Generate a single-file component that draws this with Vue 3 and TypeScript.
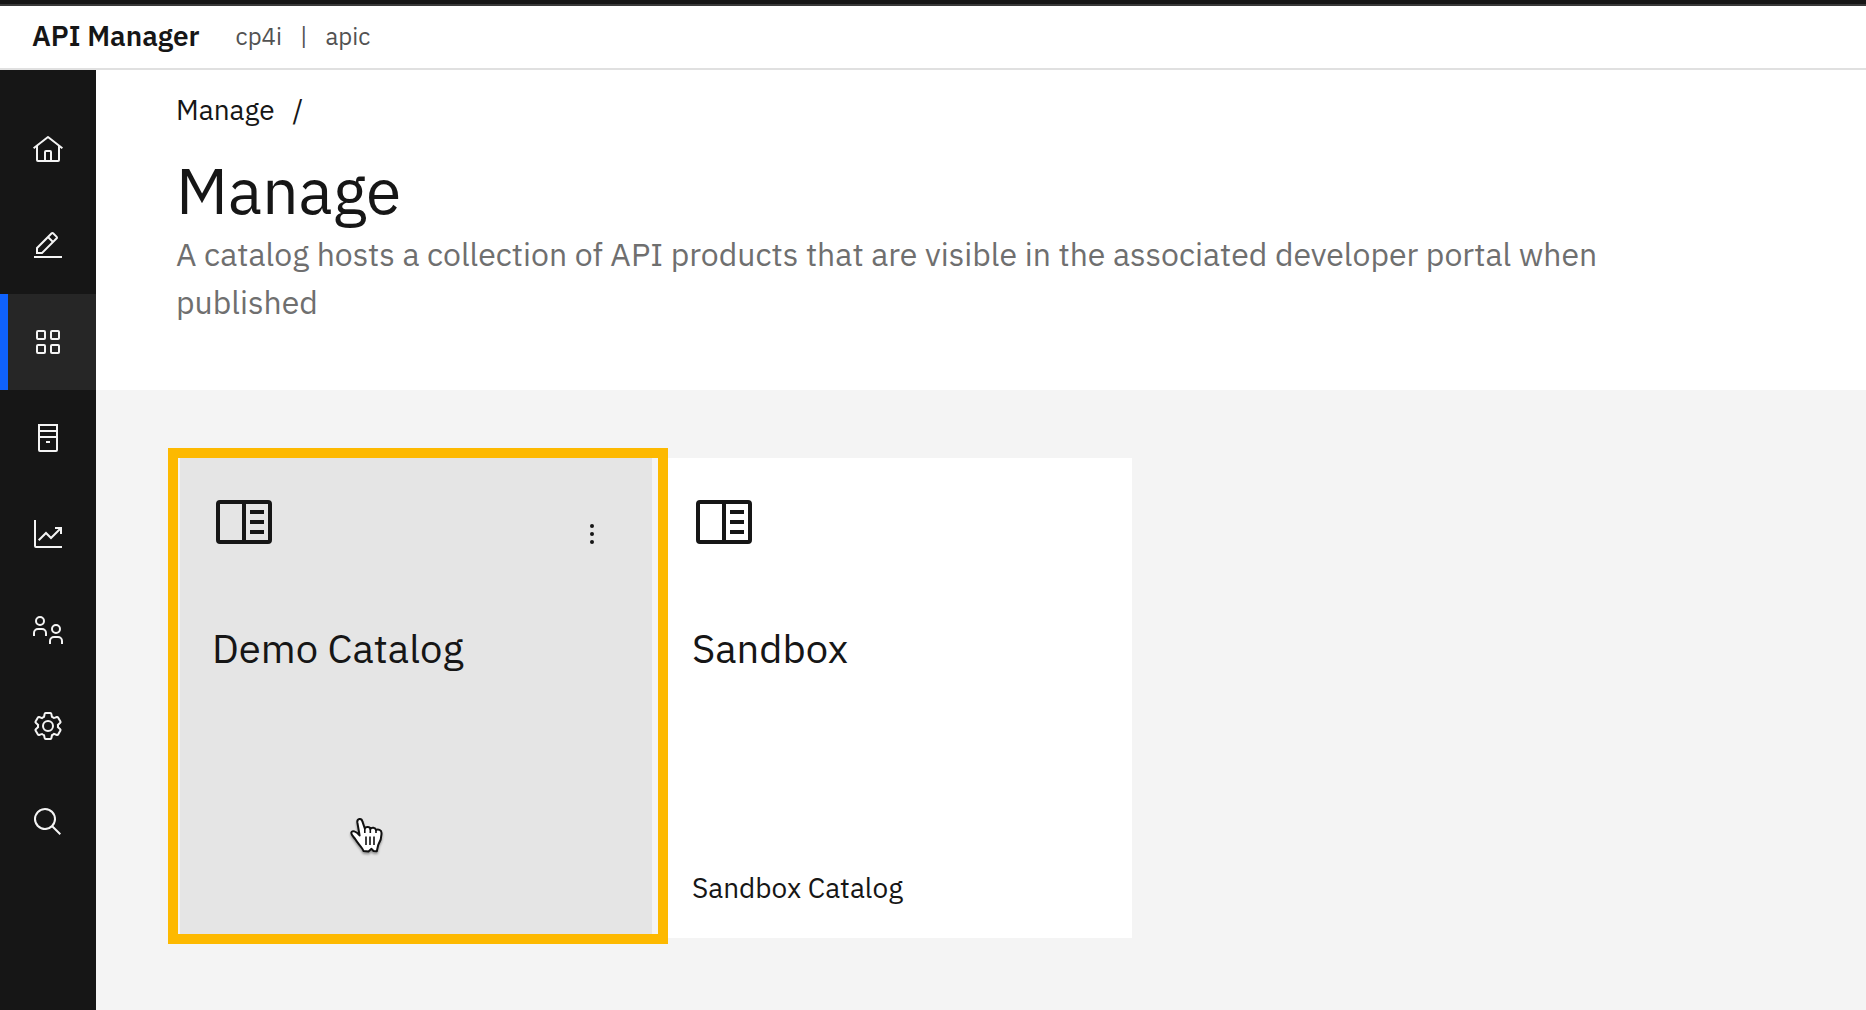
<script setup lang="ts">
interface NavItem {
  label: string
  active?: boolean
  fills?: string[]
  strokes?: string[]
}

interface Catalog {
  title: string
  summary?: string
  selected?: boolean
}

const navItems: NavItem[] = [
  {
    label: 'Home',
    fills: [
      'M16.61 2.21a1.01 1.01 0 0 0-1.24 0L1 13.42l1.24 1.57L4 13.62V26a2 2 0 0 0 2 2h20a2 2 0 0 0 2-2V13.63L29.76 15 31 13.43ZM18 26h-4v-8h4Zm2 0v-8a2 2 0 0 0-2-2h-4a2 2 0 0 0-2 2v8H6V12.06l10-7.79 10 7.8V26Z',
    ],
  },
  {
    label: 'Develop',
    fills: [
      'M2 26h28v2H2z',
      'M25.4 9c.8-.8.8-2 0-2.8l-3.6-3.6c-.8-.8-2-.8-2.8 0l-15 15V24h6.4l15-15zm-5-5L24 7.6l-3 3L17.4 7l3-3zM6 22v-3.6l10-10 3.6 3.6-10 10H6z',
    ],
  },
  {
    label: 'Manage',
    active: true,
    fills: [
      'M12 4H6a2 2 0 0 0-2 2v6a2 2 0 0 0 2 2h6a2 2 0 0 0 2-2V6a2 2 0 0 0-2-2Zm0 8H6V6h6Z',
      'M26 4h-6a2 2 0 0 0-2 2v6a2 2 0 0 0 2 2h6a2 2 0 0 0 2-2V6a2 2 0 0 0-2-2Zm0 8h-6V6h6Z',
      'M12 18H6a2 2 0 0 0-2 2v6a2 2 0 0 0 2 2h6a2 2 0 0 0 2-2v-6a2 2 0 0 0-2-2Zm0 8H6v-6h6Z',
      'M26 18h-6a2 2 0 0 0-2 2v6a2 2 0 0 0 2 2h6a2 2 0 0 0 2-2v-6a2 2 0 0 0-2-2Zm0 8h-6v-6h6Z',
    ],
  },
  {
    label: 'Resources',
    strokes: ['M7 3h18v25a1 1 0 0 1-1 1H8a1 1 0 0 1-1-1Z', 'M7 9h18M7 15h18M14 20h4'],
  },
  {
    label: 'Analytics',
    strokes: ['M3 2v26a1 1 0 0 0 1 1h26', 'M6.7 22.3 14 15l5 5L29 10', 'M23 10h6v6'],
  },
  {
    label: 'Members',
    strokes: [
      'M12 7a4 4 0 1 1-8 0 4 4 0 0 1 8 0Z',
      'M2 22v-3a4 4 0 0 1 4-4h4a4 4 0 0 1 4 4v3',
      'M28 15a4 4 0 1 1-8 0 4 4 0 0 1 8 0Z',
      'M18 30v-3a4 4 0 0 1 4-4h4a4 4 0 0 1 4 4v3',
    ],
  },
  {
    label: 'Settings',
    fills: [
      'M27 16.76c0-.25 0-.5 0-.76s0-.51 0-.77l1.92-1.68A2 2 0 0 0 29.3 11l-2.36-4a2 2 0 0 0-1.73-1 2 2 0 0 0-.64.1l-2.43.82a11.35 11.35 0 0 0-1.31-.75l-.51-2.52a2 2 0 0 0-2-1.61h-4.68a2 2 0 0 0-2 1.61l-.51 2.52a11.48 11.48 0 0 0-1.32.75l-2.38-.86A2 2 0 0 0 6.79 6a2 2 0 0 0-1.73 1L2.7 11a2 2 0 0 0 .41 2.51L5 15.24c0 .25 0 .5 0 .76s0 .51 0 .77l-1.89 1.68A2 2 0 0 0 2.7 21l2.36 4a2 2 0 0 0 1.73 1 2 2 0 0 0 .64-.1l2.43-.82a11.35 11.35 0 0 0 1.31.75l.51 2.52a2 2 0 0 0 2 1.61h4.72a2 2 0 0 0 2-1.61l.51-2.52a11.48 11.48 0 0 0 1.32-.75l2.42.82a2 2 0 0 0 .64.1 2 2 0 0 0 1.73-1l2.28-4a2 2 0 0 0-.41-2.51ZM25.21 24l-3.43-1.16a8.86 8.86 0 0 1-2.71 1.57L18.36 28h-4.72l-.71-3.55a9.36 9.36 0 0 1-2.7-1.57L6.79 24l-2.36-4 2.72-2.4a8.9 8.9 0 0 1 0-3.13L4.43 12l2.36-4 3.43 1.16a8.86 8.86 0 0 1 2.71-1.57L13.64 4h4.72l.71 3.55a9.36 9.36 0 0 1 2.7 1.57L25.21 8l2.36 4-2.72 2.4a8.9 8.9 0 0 1 0 3.13L27.57 20Z',
      'M16 22a6 6 0 1 1 0-12 6 6 0 0 1 0 12Zm0-10a4 4 0 1 0 0 8 4 4 0 0 0 0-8Z',
    ],
  },
  {
    label: 'Search',
    fills: ['m29 27.59-7.55-7.56a11.02 11.02 0 1 0-1.42 1.42L27.59 29ZM4 13a9 9 0 1 1 9 9 9 9 0 0 1-9-9Z'],
  },
]

const catalogs: Catalog[] = [
  { title: 'Demo Catalog', selected: true },
  { title: 'Sandbox', summary: 'Sandbox Catalog' },
]
</script>

<template>
  <div class="app">
    <header class="topbar">
      <span class="product">API Manager</span>
      <span class="context">
        <span>cp4i</span>
        <span>|</span>
        <span>apic</span>
      </span>
    </header>

    <div class="body">
      <nav class="sidebar" aria-label="Main">
        <a
          v-for="item in navItems"
          :key="item.label"
          href="#"
          class="nav-link"
          :class="{ active: item.active }"
          :aria-label="item.label"
        >
          <svg class="nav-icon" viewBox="0 0 32 32" aria-hidden="true">
            <path v-for="d in item.fills" :key="d" :d="d" fill="currentColor" />
            <path
              v-for="d in item.strokes"
              :key="d"
              :d="d"
              fill="none"
              stroke="currentColor"
              stroke-width="2"
            />
          </svg>
        </a>
      </nav>

      <main class="main">
        <section class="hero">
          <nav class="breadcrumb" aria-label="Breadcrumb">
            <a href="#">Manage</a>
            <span>/</span>
          </nav>
          <h1>Manage</h1>
          <p>
            A catalog hosts a collection of API products that are visible in the associated
            developer portal when published
          </p>
        </section>

        <section class="tiles">
          <article
            v-for="catalog in catalogs"
            :key="catalog.title"
            class="tile"
            :class="{ selected: catalog.selected }"
          >
            <div class="tile-head">
              <svg class="tile-icon" viewBox="0 0 32 32" aria-hidden="true">
                <path
                  d="M4 6h24a1 1 0 0 1 1 1v18a1 1 0 0 1-1 1H4a1 1 0 0 1-1-1V7a1 1 0 0 1 1-1ZM16 6v20M19 11h7M19 16h7M19 21h7"
                  fill="none"
                  stroke="currentColor"
                  stroke-width="2"
                />
              </svg>
              <button v-if="catalog.selected" type="button" class="menu" aria-label="Options">
                <svg viewBox="0 0 32 32" aria-hidden="true">
                  <circle cx="16" cy="8" r="2" />
                  <circle cx="16" cy="16" r="2" />
                  <circle cx="16" cy="24" r="2" />
                </svg>
              </button>
            </div>
            <h2><a href="#">{{ catalog.title }}</a></h2>
            <p v-if="catalog.summary">{{ catalog.summary }}</p>
            <template v-if="catalog.selected">
              <div class="highlight"></div>
              <svg class="pointer" viewBox="0 0 36 40" aria-hidden="true">
                <path
                  d="M9.3 6.2C9 2.6 13.5 1.8 14.4 5.4l2.4 7.1c.7-2 5.2-2 5.5.5 1.2-2 5.2-1.8 5.7 1 2-1.2 5.6-.2 5.5 3 .3 6-1.5 9-3.3 12l-1.4 6.3-3.3-.3-2-2.2-3 2.7-5-.5C14.5 31.5 10 28 7.5 23.5 6 21 3 19 3.3 16.8 4 14 8 14.800 11.6 19.5Z"
                  fill="#fff"
                  stroke="#111"
                  stroke-width="2"
                  stroke-linejoin="round"
                />
                <path
                  d="M16.8 12v5M22.3 13v4M28 14v3M18 20.5v8.5M22 20.5v8.5M26 20.5v8.5"
                  fill="none"
                  stroke="#111"
                  stroke-width="1.6"
                />
              </svg>
            </template>
          </article>
        </section>
      </main>
    </div>
  </div>
</template>

<style>
body {
  margin: 0;
}
</style>

<style scoped>
.app {
  display: flex;
  flex-direction: column;
  min-height: 100vh;
  box-sizing: border-box;
  border-top: 4px solid #161616;
  background: #f4f4f4;
  color: #161616;
  font-family: 'IBM Plex Sans', Roboto, sans-serif;
}

.app a {
  color: inherit;
  text-decoration: none;
}

.topbar {
  display: flex;
  align-items: center;
  gap: 36px;
  padding: 12px 32px 14px;
  border-top: 2px solid #393939;
  border-bottom: 2px solid #e0e0e0;
  background: #fff;
  line-height: 36px;
}

.product {
  font-size: 28px;
  font-weight: 600;
}

.context {
  display: flex;
  gap: 18px;
  font-size: 24px;
  color: #525252;
}

.body {
  display: flex;
  flex: 1;
}

.sidebar {
  display: flex;
  flex-direction: column;
  flex: 0 0 96px;
  padding-top: 32px;
  background: #161616;
}

.nav-link {
  display: flex;
  align-items: center;
  justify-content: center;
  height: 96px;
}

.app .nav-link {
  color: #f4f4f4;
}

.nav-link.active {
  background: #262626;
  box-shadow: inset 8px 0 #0f62fe;
}

.nav-icon {
  width: 32px;
  height: 32px;
}

.main {
  flex: 1;
  min-width: 0;
}

.hero {
  padding: 20px 80px 64px;
  background: #fff;
}

.breadcrumb {
  display: flex;
  gap: 18px;
  font-size: 28px;
  line-height: 40px;
}

h1 {
  margin: 24px 0 4px;
  font-size: 64px;
  font-weight: 400;
  line-height: 72px;
}

.hero p {
  max-width: 1440px;
  margin: 0;
  font-size: 32px;
  line-height: 48px;
  color: #6f6f6f;
}

.tiles {
  display: flex;
  flex-wrap: wrap;
  gap: 8px;
  padding: 68px 84px;
}

.tile {
  position: relative;
  display: flex;
  flex-direction: column;
  box-sizing: border-box;
  width: 472px;
  min-height: 480px;
  padding: 32px;
  background: #fff;
}

.tile.selected {
  z-index: 1;
  background: #e5e5e5;
}

.tile-head {
  display: flex;
  justify-content: space-between;
  height: 128px;
}

.tile-icon {
  width: 64px;
  height: 64px;
}

.menu {
  width: 56px;
  height: 56px;
  margin-top: 16px;
  padding: 12px;
  border: 0;
  background: none;
}

.menu svg {
  display: block;
  width: 32px;
  height: 32px;
  fill: #161616;
}

h2 {
  margin: 6px 0 0;
  font-size: 40px;
  font-weight: 400;
  line-height: 48px;
}

.tile p {
  margin: auto 0 0;
  font-size: 28px;
  line-height: 36px;
}

.highlight {
  position: absolute;
  inset: -10px -16px -6px -12px;
  border: 10px solid #fdb900;
  pointer-events: none;
}

.pointer {
  position: absolute;
  left: 168px;
  top: 358px;
  width: 36px;
  height: 40px;
  filter: drop-shadow(0 2px 1px rgba(0, 0, 0, 0.35));
}
</style>
